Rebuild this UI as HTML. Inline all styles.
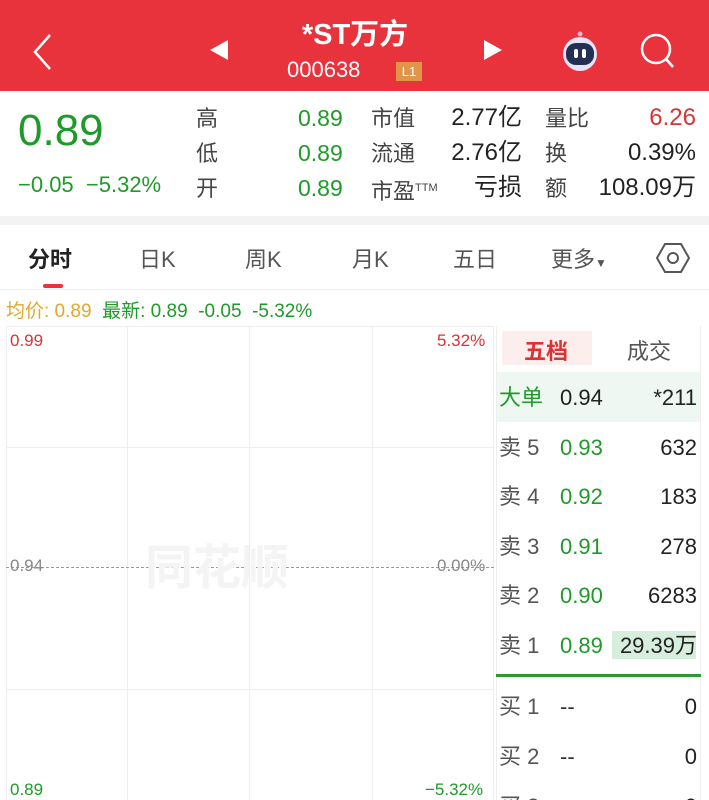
<!DOCTYPE html><html><head><meta charset="utf-8"><style>
*{margin:0;padding:0;box-sizing:border-box}
html,body{width:709px;height:800px;overflow:hidden}
body{background:#fff;font-family:"Liberation Sans","Noto Sans CJK SC",sans-serif;position:relative;color:#333}
.a{position:absolute;white-space:nowrap}
.g{color:#1f9a2a}.r{color:#d93333}
</style></head><body>
<div class="a" style="left:0;top:0;width:709px;height:91px;background:#e8333d"></div>
<svg class="a" style="left:30px;top:32px" width="26" height="40"><path d="M20 3 L5 20 L20 37" stroke="#fff" stroke-width="2.5" fill="none"/></svg>
<svg class="a" style="left:208px;top:38px" width="22" height="24"><path d="M20 2 L2 12 L20 22Z" fill="#fff"/></svg>
<svg class="a" style="left:482px;top:38px" width="22" height="24"><path d="M2 2 L20 12 L2 22Z" fill="#fff"/></svg>
<div class="a" style="left:280px;top:11px;width:150px;text-align:center;color:#fff;font-size:29px;font-weight:bold">*ST万方</div>
<div class="a" style="left:287px;top:57px;color:#fff;font-size:22px">000638</div>
<div class="a" style="left:396px;top:62px;width:26px;height:19px;background:#e0954a;color:#fff;font-size:13px;text-align:center;line-height:19px">L1</div>
<svg class="a" style="left:556px;top:28px" width="48" height="44"><circle cx="24" cy="26" r="17" fill="#e8e4f5"/><rect x="10" y="15" width="28" height="22" rx="10" fill="#233056"/><rect x="18" y="21" width="4" height="9" rx="2" fill="#fff"/><rect x="26" y="21" width="4" height="9" rx="2" fill="#fff"/><circle cx="24" cy="6" r="2.5" fill="#f5b2c8"/></svg>
<svg class="a" style="left:636px;top:30px" width="42" height="42"><circle cx="20" cy="19" r="14" stroke="#fff" stroke-width="2.5" fill="none"/><path d="M30 29 L37 37" stroke="#fff" stroke-width="2.5"/></svg>

<div class="a g" style="left:18px;top:106px;font-size:44px">0.89</div>
<div class="a g" style="left:18px;top:172px;font-size:22px">−0.05&nbsp;&nbsp;−5.32%</div>
<div class="a" style="left:196px;top:101px;font-size:22px;line-height:35px;color:#444">高<br>低<br>开</div>
<div class="a g" style="left:298px;top:101px;font-size:23px;line-height:35px">0.89<br>0.89<br>0.89</div>
<div class="a" style="left:371px;top:101px;font-size:22px;line-height:35px;color:#444">市值<br>流通<br>市盈<span style="font-size:11px;vertical-align:8px">TTM</span></div>
<div class="a" style="left:440px;top:100px;font-size:24px;line-height:35px;color:#222;text-align:right;width:82px">2.77亿<br>2.76亿<br>亏损</div>
<div class="a" style="left:545px;top:101px;font-size:22px;line-height:35px;color:#444">量比<br>换<br>额</div>
<div class="a" style="left:580px;top:100px;font-size:24px;line-height:35px;color:#222;text-align:right;width:116px"><span class="r">6.26</span><br>0.39%<br>108.09万</div>
<div class="a" style="left:0;top:216px;width:709px;height:9px;background:#f3f3f3"></div>

<div class="a" style="left:28px;top:242px;font-size:22px;color:#222;font-weight:bold">分时</div>
<div class="a" style="left:43px;top:284px;width:20px;height:4px;border-radius:2px;background:#e8333d"></div>
<div class="a" style="left:139px;top:242px;font-size:22px;color:#555">日K</div>
<div class="a" style="left:245px;top:242px;font-size:22px;color:#555">周K</div>
<div class="a" style="left:352px;top:242px;font-size:22px;color:#555">月K</div>
<div class="a" style="left:453px;top:242px;font-size:22px;color:#555">五日</div>
<div class="a" style="left:551px;top:242px;font-size:22px;color:#555">更多<span style="font-size:12px">▼</span></div>
<svg class="a" style="left:655px;top:241px" width="36" height="34"><path d="M10 3 H26 L34 17 L26 31 H10 L2 17Z" stroke="#555" stroke-width="2" fill="none"/><circle cx="18" cy="17" r="5" stroke="#555" stroke-width="2" fill="none"/></svg>
<div class="a" style="left:0;top:289px;width:709px;height:1px;background:#eee"></div>
<div class="a" style="left:6px;top:296px;font-size:19px"><span style="color:#e0a830">均价: 0.89</span>&nbsp;&nbsp;<span class="g">最新: 0.89&nbsp;&nbsp;-0.05&nbsp;&nbsp;-5.32%</span></div>

<div class="a" style="left:6px;top:326px;width:488px;height:480px;border:1px solid #eee"></div>
<div class="a" style="left:127px;top:326px;width:1px;height:474px;background:#eee"></div>
<div class="a" style="left:249px;top:326px;width:1px;height:474px;background:#eee"></div>
<div class="a" style="left:372px;top:326px;width:1px;height:474px;background:#eee"></div>
<div class="a" style="left:6px;top:447px;width:488px;height:1px;background:#eee"></div>
<div class="a" style="left:6px;top:689px;width:488px;height:1px;background:#eee"></div>
<div class="a" style="left:6px;top:567px;width:488px;border-top:1px dashed #999"></div>
<div class="a" style="left:145px;top:528px;font-size:48px;color:#f4f4f4;font-weight:bold">同花顺</div>
<div class="a r" style="left:10px;top:331px;font-size:17px">0.99</div>
<div class="a r" style="left:437px;top:331px;font-size:17px">5.32%</div>
<div class="a" style="left:10px;top:556px;font-size:17px;color:#888">0.94</div>
<div class="a" style="left:437px;top:556px;font-size:17px;color:#888">0.00%</div>
<div class="a g" style="left:10px;top:780px;font-size:17px">0.89</div>
<div class="a g" style="left:425px;top:780px;font-size:17px">−5.32%</div>

<div class="a" style="left:496px;top:326px;width:205px;height:480px;border-left:1px solid #eee;border-right:1px solid #eee"></div>
<div class="a" style="left:502px;top:331px;width:90px;height:34px;background:#fdeeee"></div>
<div class="a r" style="left:524px;top:334px;font-size:22px;font-weight:bold">五档</div>
<div class="a" style="left:627px;top:334px;font-size:22px;color:#555">成交</div>
<div class="a" style="left:497px;top:372px;width:203px;height:50px;background:#eef7f2"></div>
<div class="a" style="left:499px;top:373px;font-size:22px;line-height:49.6px;color:#555">
<span class="g">大单</span><br>卖 5<br>卖 4<br>卖 3<br>卖 2<br>卖 1</div>
<div class="a" style="left:560px;top:373px;font-size:22px;line-height:49.6px" ><span style="color:#222">0.94</span><br><span class="g">0.93<br>0.92<br>0.91<br>0.90<br>0.89</span></div>
<div class="a" style="left:612px;top:631px;width:84px;height:28px;background:#d6eedb"></div>
<div class="a" style="left:600px;top:373px;width:97px;text-align:right;font-size:22px;line-height:49.6px;color:#222">*211<br>632<br>183<br>278<br>6283<br>29.39万</div>
<div class="a" style="left:496px;top:674px;width:205px;height:3px;background:#2a9a32"></div>
<div class="a" style="left:499px;top:682px;font-size:22px;line-height:50px;color:#555">买 1<br>买 2<br>买 3</div>
<div class="a" style="left:560px;top:682px;font-size:22px;line-height:50px;color:#333">--<br>--</div>
<div class="a" style="left:600px;top:682px;width:97px;text-align:right;font-size:22px;line-height:50px;color:#222">0<br>0<br>0</div>
</body></html>
